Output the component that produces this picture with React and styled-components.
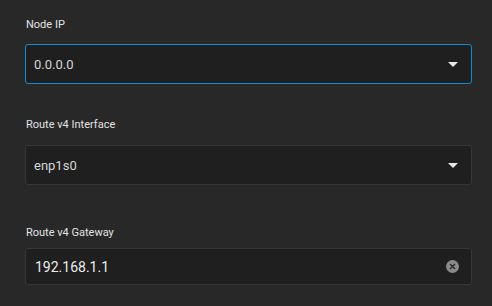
import React from "react";
import styled, { createGlobalStyle } from "styled-components";

/* Page styling */
const GlobalStyle = createGlobalStyle`
  html, body {
    margin: 0;
    padding: 0;
    background: #282828;
    font-family: Roboto, "Liberation Sans", sans-serif;
  }
`;

const Form = styled.div`
  display: flex;
  flex-direction: column;
  padding: 17px 20px 0 25px;
`;

const Field = styled.div`
  display: flex;
  flex-direction: column;
  margin-bottom: ${props => props.gap}px;
`;

const Label = styled.label`
  font-size: 11px;
  line-height: 16px;
  color: #e2e2e2;
  padding-left: 1px;
  margin-bottom: ${props => props.gap}px;
`;

const Box = styled.div`
  display: flex;
  align-items: center;
  justify-content: space-between;
  box-sizing: border-box;
  height: ${props => props.h}px;
  padding: 0 12px 0 ${props => props.pad}px;
  background: #1f1f1f;
  border: 1px solid ${props => (props.focused ? "#0b8fd4" : "#363636")};
  border-radius: 3px;
`;

const Value = styled.span`
  font-size: ${props => props.size}px;
  color: ${props => props.color};
`;

const Caret = styled.span`
  width: 0;
  height: 0;
  margin-right: 1px;
  border-left: 5px solid transparent;
  border-right: 5px solid transparent;
  border-top: 5px solid #e8e8e8;
`;

const ClearButton = styled.span`
  display: flex;
  align-items: center;
  justify-content: center;
  width: 13px;
  height: 13px;
  border-radius: 50%;
  background: #8a8a8a;
`;

const Select = ({ value, focused }) => (
  <Box h={40} pad={8} focused={focused}>
    <Value size={13} color="#d6d6d6">{value}</Value>
    <Caret />
  </Box>
);

export default function App() {
  return (
    <>
      <GlobalStyle />
      <Form>
        <Field gap={33}>
          <Label gap={11}>Node IP</Label>
          <Select value="0.0.0.0" focused />
        </Field>
        <Field gap={40}>
          <Label gap={12}>Route v4 Interface</Label>
          <Select value="enp1s0" />
        </Field>
        <Field gap={0}>
          <Label gap={7}>Route v4 Gateway</Label>
          <Box h={37} pad={9}>
            <Value size={14} color="#ececec">192.168.1.1</Value>
            <ClearButton>
              <svg width="7" height="7" viewBox="0 0 7 7">
                <path d="M1 1L6 6M6 1L1 6" stroke="#2a2a2a" strokeWidth="1.4" />
              </svg>
            </ClearButton>
          </Box>
        </Field>
      </Form>
    </>
  );
}
